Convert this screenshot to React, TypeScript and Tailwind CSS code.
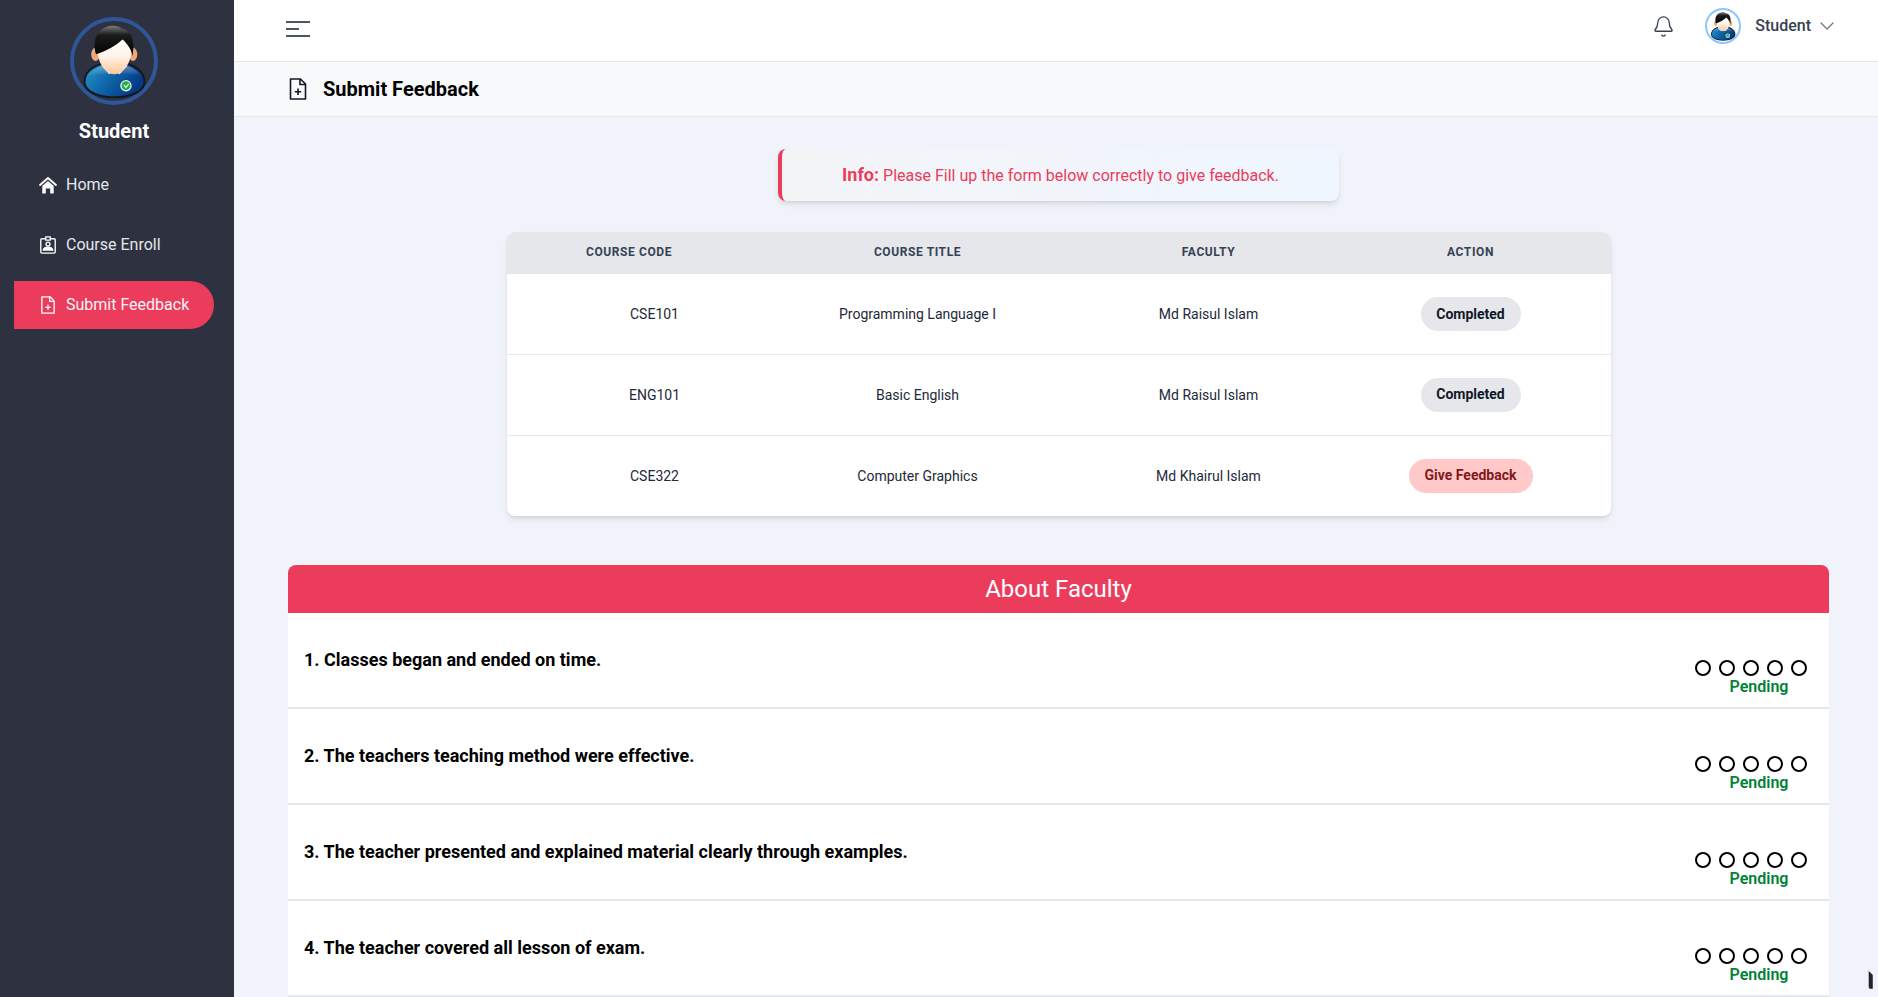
import { Bell, ChevronDown } from "lucide-react";

const courses = [
  { code: "CSE101", title: "Programming Language I", faculty: "Md Raisul Islam", done: true },
  { code: "ENG101", title: "Basic English", faculty: "Md Raisul Islam", done: true },
  { code: "CSE322", title: "Computer Graphics", faculty: "Md Khairul Islam", done: false },
];

const questions = [
  "1. Classes began and ended on time.",
  "2. The teachers teaching method were effective.",
  "3. The teacher presented and explained material clearly through examples.",
  "4. The teacher covered all lesson of exam.",
];

function StudentPicture({ className }: { className?: string }) {
  return (
    <svg viewBox="0 0 80 80" className={className}>
      <defs>
        <linearGradient id="shirt" x1="0" y1="0" x2="1" y2="0.4">
          <stop offset="0" stopColor="#2796c8" />
          <stop offset="0.5" stopColor="#0f66ab" />
          <stop offset="1" stopColor="#053a86" />
        </linearGradient>
        <linearGradient id="shine" x1="0" y1="0" x2="0" y2="1">
          <stop offset="0" stopColor="#ffffff" stopOpacity="0.35" />
          <stop offset="1" stopColor="#ffffff" stopOpacity="0" />
        </linearGradient>
        <linearGradient id="face" x1="0" y1="0" x2="0" y2="1">
          <stop offset="0" stopColor="#ffffff" />
          <stop offset="0.5" stopColor="#fff3e8" />
          <stop offset="1" stopColor="#fdc596" />
        </linearGradient>
        <linearGradient id="hair" x1="0" y1="0" x2="0" y2="1">
          <stop offset="0" stopColor="#7a7a7a" />
          <stop offset="0.3" stopColor="#1c1c1c" />
          <stop offset="1" stopColor="#000000" />
        </linearGradient>
      </defs>
      <path d="M8 62C8 50 19 44 29 41L52 41C62 44 73 50 73 62C73 73 58 79 40 79C23 79 8 73 8 62Z" fill="#14171f" />
      <path d="M10 62C10 51 20 46 30 43L50 43C60 46 71 51 71 62C71 71 57 77 40 77C24 77 10 71 10 62Z" fill="url(#shirt)" />
      <path d="M13 56C17 49 24 46 31 44L50 44C57 46 64 49 68 56C55 52 26 52 13 56Z" fill="url(#shine)" />
      <path d="M27 45L35 54L40 50L46 54L54 45L40 40Z" fill="#eef2f6" />
      <ellipse cx="20.5" cy="33" rx="4.5" ry="7" fill="#eca878" />
      <ellipse cx="60" cy="33" rx="4.5" ry="7" fill="#eca878" />
      <path d="M22.5 24C23 14 58 14 58.5 24C60 40 50 54 40.5 54C31 54 21 40 22.5 24Z" fill="url(#face)" />
      <path d="M21 33C16 14 26 3 39 3C43 3 46 4 48 6C56 6 63 15 59.5 35C58.5 28 55 23 49 17C42 24 32 29 21 33Z" fill="url(#hair)" />
      <circle cx="52.6" cy="66" r="6" fill="#dff3df" />
      <circle cx="52.6" cy="66" r="4.6" fill="#20ac48" />
      <path d="M50.4 65L52.6 68L55.4 64" fill="none" stroke="#eaffea" strokeWidth="1.2" />
    </svg>
  );
}

function HomeIcon({ className }: { className?: string }) {
  return (
    <svg viewBox="0 0 18 17" fill="currentColor" className={className}>
      <path d="M1 8.5L9 1.5L17 8.5" fill="none" stroke="currentColor" strokeWidth="1.8" strokeLinecap="round" strokeLinejoin="round" />
      <path d="M3.3 9.2L9 4.4L14.7 9.2V17H11.2V12H6.8V17H3.3Z" />
    </svg>
  );
}

function FilePlusIcon({ className }: { className?: string }) {
  return (
    <svg viewBox="0 0 18 22" fill="none" stroke="currentColor" strokeWidth="1.6" className={className}>
      <path d="M1.5 1H11.5L16.5 6V21H1.5Z" strokeLinejoin="round" />
      <path d="M11 1V6.5H16.5" />
      <path d="M9 10.5V17M5.8 13.8H12.2" />
    </svg>
  );
}

function BadgeIcon({ className }: { className?: string }) {
  return (
    <svg viewBox="0 0 18 20" fill="none" stroke="currentColor" strokeWidth="1.5" className={className}>
      <path d="M6 3H2.2C1.5 3 1 3.5 1 4.2V17.8C1 18.5 1.5 19 2.2 19H15.8C16.5 19 17 18.5 17 17.8V4.2C17 3.5 16.5 3 15.8 3H12" />
      <path d="M6.5 4.5V1H11.5V4.5Z" />
      <circle cx="9" cy="9" r="2.2" />
      <path d="M3.8 15.5C4.5 13 6.5 12.5 9 12.5C11.5 12.5 13.5 13 14.2 15.5Z" fill="currentColor" />
    </svg>
  );
}

export default function App() {
  return (
    <div className="relative flex h-screen overflow-hidden bg-[#f0f3f9] font-['Roboto',sans-serif]">
      {/* Sidebar */}
      <aside className="w-[234px] shrink-0 bg-[#2d3140] pt-[17px] text-white">
        <div className="flex flex-col items-center pr-[6px]">
          <div className="flex h-[88px] w-[88px] items-center justify-center rounded-full border-4 border-[#2f5797]">
            <StudentPicture className="h-[76px] w-[76px]" />
          </div>
          <h2 className="mt-[12px] text-xl leading-7 font-bold">Student</h2>
        </div>
        <nav className="mt-[16px] flex flex-col gap-3 pr-5 pl-[14px] text-base">
          <a className="flex h-12 items-center gap-[9px] pl-[25px] text-gray-200">
            <HomeIcon className="h-[18px] w-[18px] text-white" />
            Home
          </a>
          <a className="flex h-12 items-center gap-[9px] pl-[25px] text-gray-200">
            <BadgeIcon className="h-[18px] w-[18px] text-white" />
            Course Enroll
          </a>
          <a className="flex h-12 items-center gap-[9px] rounded-r-full bg-[#ec3c5c] pl-[25px] text-gray-100">
            <FilePlusIcon className="h-[18px] w-[18px] text-white" />
            Submit Feedback
          </a>
        </nav>
      </aside>

      <main className="min-w-0 flex-1">
        {/* Top bar */}
        <header className="flex h-[62px] items-center justify-between border-b border-gray-200 bg-white pr-[39px] pl-[52px]">
          <div className="-mt-[3px] flex w-6 flex-col gap-[5px]">
            <span className="h-0.5 w-6 bg-gray-600" />
            <span className="h-0.5 w-[13px] bg-gray-600" />
            <span className="h-0.5 w-6 bg-gray-600" />
          </div>
          <div className="-mt-[9px] flex items-center">
            <Bell className="h-[23px] w-[23px] text-gray-700" strokeWidth={1.4} />
            <div className="mr-[14px] ml-[30px] flex h-9 w-9 items-center justify-center rounded-full border-2 border-blue-300">
              <StudentPicture className="h-[30px] w-[30px]" />
            </div>
            <span className="text-base font-medium text-gray-700">Student</span>
            <ChevronDown className="ml-[4px] h-6 w-6 text-gray-500" strokeWidth={1.2} />
          </div>
        </header>

        {/* Page title */}
        <div className="flex h-[55px] items-center gap-4 border-b border-gray-200 bg-[#f8f9fb] pl-[55px]">
          <FilePlusIcon className="h-[22px] w-[18px] text-gray-900" />
          <h1 className="text-xl font-bold text-black">Submit Feedback</h1>
        </div>

        <div className="w-[1595px] pt-[32px] pl-[54px]">
          {/* Info alert */}
          <div className="mx-auto flex h-[52px] w-[561px] items-center justify-center rounded-lg border-l-4 border-[#ec3c5c] bg-gradient-to-r from-gray-100 to-blue-50 text-[#ec3c5c] shadow-md">
            <p className="text-base">
              <b className="text-lg font-bold">Info:</b> Please Fill up the form below correctly to give feedback.
            </p>
          </div>

          {/* Course table */}
          <div className="mx-auto mt-[31px] w-[1104px] overflow-hidden rounded-lg bg-white shadow-md">
            <table className="w-full table-fixed text-center text-sm text-gray-800">
              <thead className="bg-gray-200 text-xs font-bold tracking-wider text-gray-700 uppercase">
                <tr className="h-[42px]">
                  <th className="w-[245px] pb-[2px] font-bold">Course Code</th>
                  <th className="w-[332px] pb-[2px] font-bold">Course Title</th>
                  <th className="w-[250px] pb-[2px] font-bold">Faculty</th>
                  <th className="w-[277px] pr-[3px] pb-[2px] font-bold">Action</th>
                </tr>
              </thead>
              <tbody>
                {courses.map((course) => (
                  <tr key={course.code} className="h-[80.5px] border-b border-gray-200 last:border-b-0">
                    <td className="pl-[51px]">{course.code}</td>
                    <td>{course.title}</td>
                    <td>{course.faculty}</td>
                    <td className="pr-[3px]">
                      {course.done ? (
                        <span className="inline-flex h-[34px] w-[100px] items-center justify-center rounded-full bg-gray-200 pb-px font-bold text-gray-900">
                          Completed
                        </span>
                      ) : (
                        <span className="inline-flex h-[34px] w-[124px] items-center justify-center rounded-full bg-red-200 pb-px font-bold text-red-900">
                          Give Feedback
                        </span>
                      )}
                    </td>
                  </tr>
                ))}
              </tbody>
            </table>
          </div>

          {/* Feedback form */}
          <section className="mt-[49px] w-full">
            <h3 className="flex h-12 items-center justify-center rounded-t-lg bg-[#ec3c5c] text-2xl text-white">About Faculty</h3>
            {questions.map((question) => (
              <div key={question} className="flex h-[96px] justify-between border-b-2 border-gray-200 bg-white pr-[22px] pl-4">
                <p className="pt-[33px] text-lg leading-7 font-bold text-black">{question}</p>
                <div className="flex w-[112px] flex-col items-center pt-[47px]">
                  <div className="flex gap-2">
                    {[1, 2, 3, 4, 5].map((n) => (
                      <input
                        key={n}
                        type="radio"
                        readOnly
                        className="h-4 w-4 appearance-none rounded-full border-2 border-black bg-white"
                      />
                    ))}
                  </div>
                  <span className="mt-px ml-4 text-base leading-5 font-semibold text-green-700">Pending</span>
                </div>
              </div>
            ))}
          </section>
        </div>
      </main>

      {/* Mouse pointer caught in the shot */}
      <svg viewBox="0 0 5 20" className="absolute top-[970px] left-[1868px] h-5 w-[5px]">
        <path d="M0.5 0.5L5 5V19H1.5L0.5 17Z" fill="#1f2430" stroke="#d8dce6" strokeWidth="0.5" />
      </svg>
    </div>
  );
}
